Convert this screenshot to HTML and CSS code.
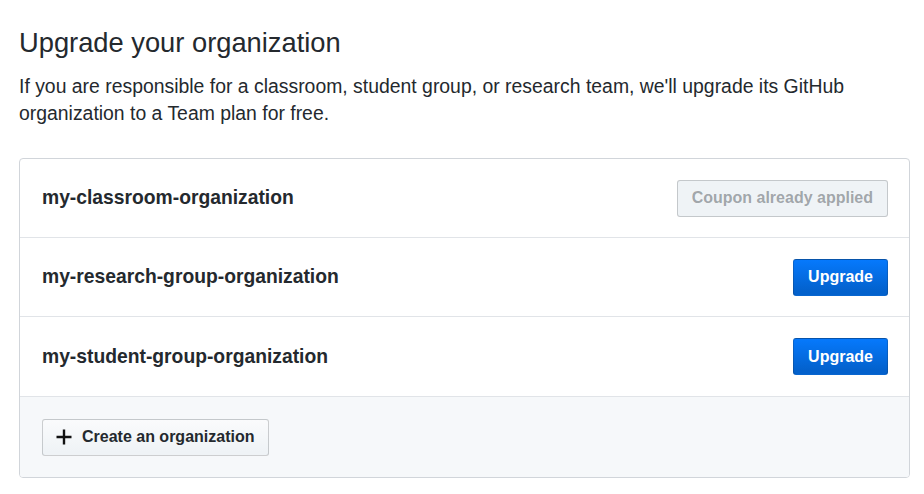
FILE: index.html
```html
<!DOCTYPE html>
<html>
<head>
<meta charset="utf-8">
<link rel="stylesheet" href="styles.css">
</head>
<body>
<main class="page">
  <h1 class="title">Upgrade your organization</h1>
  <p class="lead">If you are responsible for a classroom, student group, or research team, we'll upgrade its GitHub organization to a Team plan for free.</p>
  <div class="box">
    <div class="row">
      <span class="org">my-classroom-organization</span>
      <button class="btn btn-disabled">Coupon already applied</button>
    </div>
    <div class="row">
      <span class="org">my-research-group-organization</span>
      <button class="btn btn-primary">Upgrade</button>
    </div>
    <div class="row row-tall">
      <span class="org">my-student-group-organization</span>
      <button class="btn btn-primary">Upgrade</button>
    </div>
    <div class="row footer">
      <button class="btn btn-default"><svg class="plus" width="18" height="18" viewBox="0 0 18 18"><path d="M9 1.5v15M1.5 9h15" stroke="#111" stroke-width="2.4" fill="none"/></svg>Create an organization</button>
    </div>
  </div>
</main>
</body>
</html>
```

FILE: styles.css
```css
* { box-sizing: border-box; }
body {
  margin: 0;
  background: #fff;
  font-family: "Liberation Sans", Arial, sans-serif;
  color: #24292e;
}
.page {
  padding: 26px 14px 0 19px;
}
.title {
  margin: 0;
  font-size: 27.3px;
  font-weight: 400;
  line-height: 34px;
}
.lead {
  margin: 13px 0 0;
  font-size: 19.4px;
  line-height: 27px;
}
.box {
  margin-top: 31px;
  border: 1px solid #d1d5da;
  border-radius: 4px;
  overflow: hidden;
}
.row {
  display: flex;
  align-items: center;
  justify-content: space-between;
  height: 79px;
  padding: 0 21px 0 22px;
  border-top: 1px solid #e1e4e8;
}
.row:first-child { border-top: 0; height: 78px; }
.row.row-tall { height: 80px; }
.row.footer {
  background: #f6f8fa;
  height: 81px;
  justify-content: flex-start;
}
.org {
  font-size: 19.3px;
  font-weight: 700;
}
.btn {
  font-family: "Liberation Sans", Arial, sans-serif;
  font-size: 16px;
  font-weight: 700;
  height: 37px;
  padding: 0 14px;
  border-radius: 3px;
  border: 1px solid rgba(27,31,35,.2);
  display: inline-flex;
  align-items: center;
}
.btn-disabled {
  background: #eff3f6;
  color: rgba(36,41,46,.4);
}
.btn-primary {
  color: #fff;
  background-image: linear-gradient(-180deg, #0679fc 0%, #0361cc 90%);
  border-color: rgba(27,31,35,.2);
}
.btn-default {
  color: #24292e;
  background-image: linear-gradient(-180deg, #fafbfc 0%, #eff3f6 90%);
  padding: 0 14px 0 12px;
}
.plus { margin-right: 9px; }
```
